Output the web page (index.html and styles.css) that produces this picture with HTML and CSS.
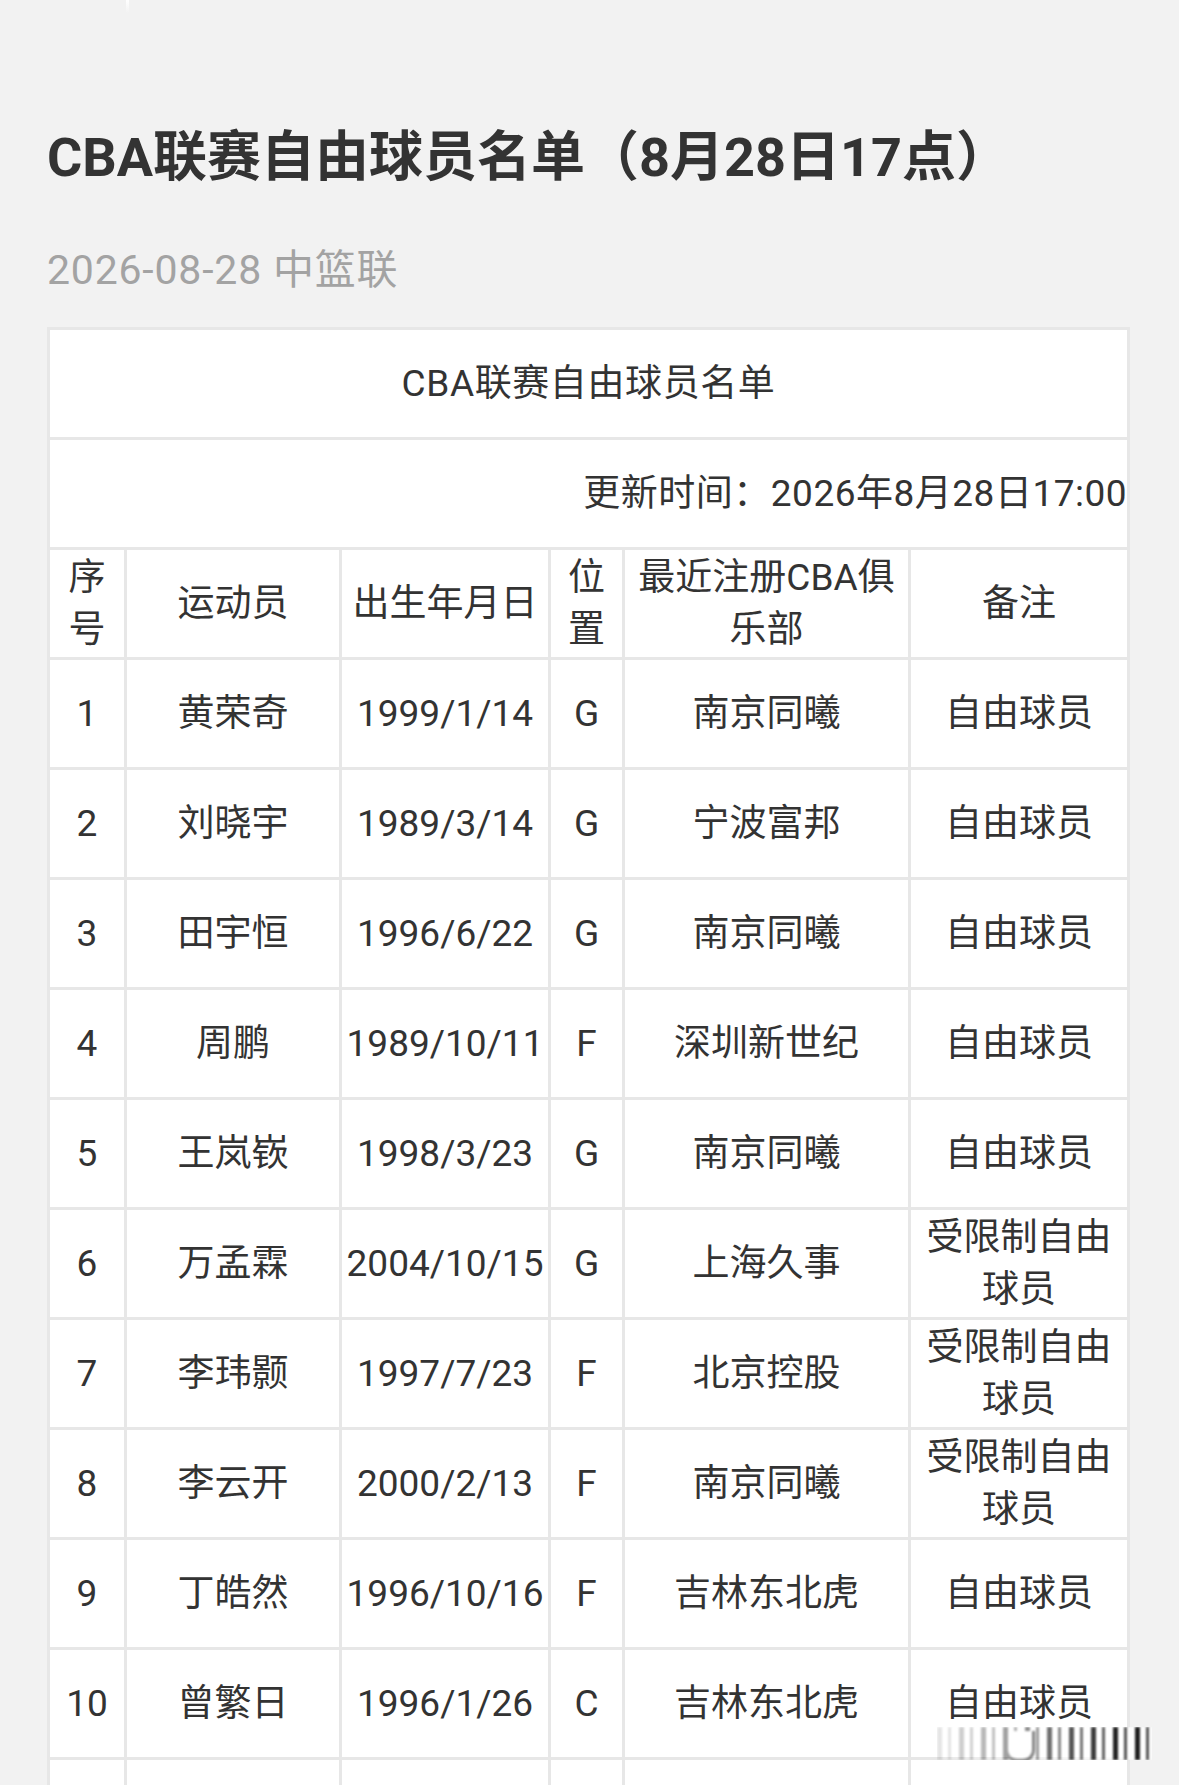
FILE: index.html
```html
<!DOCTYPE html>
<html lang="zh-CN">
<head>
<meta charset="utf-8">
<title>CBA联赛自由球员名单</title>
<link rel="stylesheet" href="styles.css">
</head>
<body>
<div class="streak"></div>
<main class="page">
  <h1 class="title">CBA联赛自由球员名单（8月28日17点）</h1>
  <div class="meta">2026-08-28 中篮联</div>
  <table class="roster">
    <colgroup>
      <col class="c1"><col class="c2"><col class="c3"><col class="c4"><col class="c5"><col class="c6">
    </colgroup>
    <tbody>
      <tr><td colspan="6" class="caption">CBA联赛自由球员名单</td></tr>
      <tr><td colspan="6" class="updated">更新时间：2026年8月28日17:00</td></tr>
      <tr><td>序号</td><td>运动员</td><td>出生年月日</td><td>位置</td><td>最近注册CBA俱乐部</td><td>备注</td></tr>
      <tr><td>1</td><td>黄荣奇</td><td class="nw">1999/1/14</td><td>G</td><td>南京同曦</td><td>自由球员</td></tr>
      <tr><td>2</td><td>刘晓宇</td><td class="nw">1989/3/14</td><td>G</td><td>宁波富邦</td><td>自由球员</td></tr>
      <tr><td>3</td><td>田宇恒</td><td class="nw">1996/6/22</td><td>G</td><td>南京同曦</td><td>自由球员</td></tr>
      <tr><td>4</td><td>周鹏</td><td class="nw">1989/10/11</td><td>F</td><td>深圳新世纪</td><td>自由球员</td></tr>
      <tr><td>5</td><td>王岚嵚</td><td class="nw">1998/3/23</td><td>G</td><td>南京同曦</td><td>自由球员</td></tr>
      <tr><td>6</td><td>万孟霖</td><td class="nw">2004/10/15</td><td>G</td><td>上海久事</td><td>受限制自由球员</td></tr>
      <tr><td>7</td><td>李玮颢</td><td class="nw">1997/7/23</td><td>F</td><td>北京控股</td><td>受限制自由球员</td></tr>
      <tr><td>8</td><td>李云开</td><td class="nw">2000/2/13</td><td>F</td><td>南京同曦</td><td>受限制自由球员</td></tr>
      <tr><td>9</td><td>丁皓然</td><td class="nw">1996/10/16</td><td>F</td><td>吉林东北虎</td><td>自由球员</td></tr>
      <tr><td>10</td><td>曾繁日</td><td class="nw">1996/1/26</td><td>C</td><td>吉林东北虎</td><td>自由球员</td></tr>
      <tr><td></td><td></td><td></td><td></td><td></td><td></td></tr>
    </tbody>
  </table>
</main>
<div class="wm"><span class="wm-u"></span></div>
</body>
</html>
```
FILE: styles.css
```css
html, body {
  margin: 0;
  padding: 0;
  background: #f2f2f2;
}
body {
  font-family: Roboto, "Noto Sans CJK SC", sans-serif;
  color: #333;
  overflow: hidden;
}
.page {
  padding: 122px 0 0 47px;
}
.title {
  margin: 0;
  font-size: 54px;
  line-height: 72px;
  font-weight: 700;
  color: #333;
  white-space: nowrap;
}
.meta {
  margin-top: 49px;
  font-size: 41px;
  line-height: 54px;
  letter-spacing: 0.8px;
  color: #a3a3a3;
}
.roster {
  margin-top: 30px;
  width: 1083px;
  table-layout: fixed;
  border-collapse: separate;
  border-spacing: 0;
  border-top: 3px solid #e7e7e7;
  border-left: 3px solid #e7e7e7;
  background: #fff;
}
.c1 { width: 77px; }
.c2 { width: 215px; }
.c3 { width: 209px; }
.c4 { width: 74px; }
.c5 { width: 286px; }
.c6 { width: 219px; }
.roster tr {
  height: 110px;
}
.roster td {
  border-right: 3px solid #e7e7e7;
  border-bottom: 3px solid #e7e7e7;
  padding: 0 4px;
  text-align: center;
  vertical-align: middle;
  font-size: 37px;
  line-height: 52px;
  color: #333;
  word-break: break-all;
}
.roster td.nw {
  white-space: nowrap;
  padding: 0;
  word-break: normal;
}
.roster td.caption {
  letter-spacing: 0.6px;
}
.roster td.updated {
  text-align: right;
  padding-right: 0;
  letter-spacing: 0.5px;
}
.streak {
  position: absolute;
  left: 126px;
  top: 0;
  width: 3px;
  height: 13px;
  background: linear-gradient(180deg, #fff, rgba(255,255,255,0));
}
.wm {
  position: absolute;
  left: 937px;
  top: 1727px;
  width: 215px;
  height: 33px;
  background: repeating-linear-gradient(90deg, #1e1e1e 0 5px, rgba(255,255,255,0.85) 5px 11px, #555 11px 14px, rgba(255,255,255,0.9) 14px 22px);
  -webkit-mask-image: linear-gradient(90deg, rgba(0,0,0,0.1), rgba(0,0,0,0.5) 40%, #000 85%);
  mask-image: linear-gradient(90deg, rgba(0,0,0,0.1), rgba(0,0,0,0.5) 40%, #000 85%);
  filter: blur(0.8px);
}
.wm-u {
  position: absolute;
  left: 68px;
  top: 4px;
  width: 24px;
  height: 28px;
  border: 3px solid #222;
  border-top: none;
  border-radius: 0 0 12px 12px;
  background: #fff;
}
```
